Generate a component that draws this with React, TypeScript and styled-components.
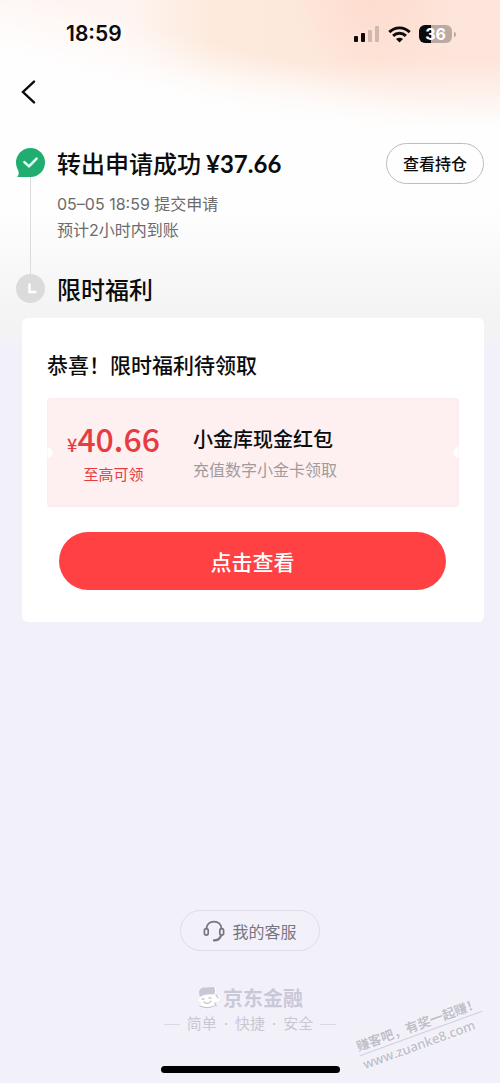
import React from "react";
import styled, { createGlobalStyle } from "styled-components";

const GlobalStyle = createGlobalStyle`
  *, *::before, *::after { box-sizing: border-box; }
  body {
    margin: 0;
    background: #f2f1fa;
    color: #0c0c0c;
    font-family: "Noto Sans CJK SC", sans-serif;
  }
  h1, h2, h3, p { margin: 0; }
  button { font-family: inherit; cursor: pointer; }
`;

const Page = styled.div`
  position: relative;
  display: flex;
  flex-direction: column;
  min-height: 100vh;
  overflow: hidden;
  background:
    radial-gradient(ellipse 80px 80px at 74% 0, rgba(253, 205, 186, 0.35), transparent),
    linear-gradient(to bottom, transparent 0, transparent 60px, #fefefe 128px, transparent 128px),
    linear-gradient(15deg, #fefefe 0, #fefefe 30%, transparent 55%) 0 0 / 100% 128px no-repeat,
    linear-gradient(to right, #fef5f2 0, #fef5f2 25%, #fdeadd 42%, #fde8dc 62%, #fde4d9 80%, #fde5db 100%) 0 0 / 100% 128px no-repeat,
    linear-gradient(to bottom, #fefefe 0, #fefefe 210px, #f4f4f4 310px, #f3f3f4 330px, #f2f1fa 350px);
`;

const StatusBar = styled.div`
  display: flex;
  align-items: center;
  justify-content: space-between;
  height: 68px;
  padding: 0 44px 0 66px;
`;

const Time = styled.time`
  font: 600 21px/24px Inter, sans-serif;
`;

const StatusIcons = styled.div`
  display: flex;
  align-items: center;
  gap: 8px;
  svg { display: block; }
`;

const Battery = styled.div`
  display: flex;
  align-items: center;
  gap: 2px;
  &::after {
    content: "";
    width: 2px;
    height: 5px;
    border-radius: 0 2px 2px 0;
    background: #bcaaa2;
  }
`;

const BatteryLevel = styled.span`
  width: 33px;
  height: 18px;
  border-radius: 6px;
  background: linear-gradient(to right, #0c0a0a 36%, #bcaaa2 36%);
  color: #fff;
  font: 700 16px/18px Inter, sans-serif;
  text-align: center;
`;

const NavBar = styled.nav`
  display: flex;
  align-items: center;
  height: 48px;
  padding: 0 16px;
`;

const BackButton = styled.button`
  display: flex;
  padding: 4px;
  border: 0;
  background: none;
  color: #0c0c0c;
`;

const Timeline = styled.ol`
  display: flex;
  flex-direction: column;
  margin: 0;
  padding: 24px 16px 0;
  list-style: none;
`;

const Step = styled.li`
  display: flex;
  gap: 12px;
`;

const Rail = styled.div<{ $line?: boolean }>`
  display: flex;
  flex-direction: column;
  align-items: center;
  flex: 0 0 29px;
  padding-top: 8px;
  svg { display: block; flex: none; }
  &::after {
    content: "";
    flex: 1;
    width: 1px;
    margin-bottom: -8px;
    background: ${(p) => (p.$line ? "#dcdcdc" : "transparent")};
  }
`;

const StepBody = styled.div`
  flex: 1;
  min-width: 0;
`;

const StepHead = styled.div`
  display: flex;
  align-items: center;
  justify-content: space-between;
  height: 46px;
`;

const StepTitle = styled.h1`
  font-size: 24px;
  font-weight: 500;
  line-height: 32px;
  white-space: nowrap;
`;

const TitleAmount = styled.span`
  margin-left: 5px;
  font-family: Lato, sans-serif;
  font-weight: 700;
`;

const StepNotes = styled.div`
  padding: 5px 0 23px;
  color: #6b6b6b;
  font: 400 16px/26px Inter, "Noto Sans CJK SC", sans-serif;
`;

const OutlineButton = styled.button`
  height: 41px;
  padding: 0 16px;
  border: 1px solid #bdbdbd;
  border-radius: 21px;
  background: #fefefe;
  color: #0c0c0c;
  font-size: 16px;
  font-weight: 500;
  line-height: 24px;
  white-space: nowrap;
`;

const Card = styled.section`
  margin: 6px 16px 0 22px;
  padding: 30px 25px 32px;
  border-radius: 6px;
  background: #fff;
`;

const CardTitle = styled.h2`
  font-size: 21px;
  font-weight: 500;
  line-height: 32px;
`;

const Coupon = styled.div`
  display: flex;
  align-items: center;
  height: 109px;
  margin-top: 18px;
  border-radius: 4px;
  background:
    radial-gradient(circle at 0 50%, #fff 5px, transparent 6px),
    radial-gradient(circle at 100% 50%, #fff 5px, transparent 6px),
    #fef0f0;
  box-shadow: inset 0 0 2px #f3e3e3;
`;

const CouponValue = styled.div`
  display: flex;
  flex-direction: column;
  align-items: center;
  flex: 0 0 133px;
  color: #e63c42;
`;

const Price = styled.div`
  font-size: 32px;
  font-weight: 500;
  line-height: 36px;
`;

const Currency = styled.span`
  font-size: 18px;
`;

const PriceNote = styled.div`
  font-size: 15px;
  line-height: 24px;
`;

const CouponInfo = styled.div`
  margin-left: 13px;
`;

const CouponName = styled.h3`
  font-size: 20px;
  font-weight: 500;
  line-height: 32px;
`;

const CouponHint = styled.p`
  color: #a39a9b;
  font-size: 16px;
  line-height: 28px;
`;

const PrimaryButton = styled.button`
  display: block;
  width: calc(100% - 25px);
  height: 58px;
  margin: 25px 13px 0 12px;
  border: 0;
  border-radius: 29px;
  background: #ff4144;
  color: #fff;
  font-size: 21px;
  font-weight: 500;
`;

const Footer = styled.footer`
  display: flex;
  flex-direction: column;
  align-items: center;
  margin-top: auto;
  padding: 32px 0 10px;
`;

const ServiceButton = styled.button`
  display: flex;
  align-items: center;
  justify-content: center;
  gap: 7px;
  width: 140px;
  height: 41px;
  border: 1px solid #dedde6;
  border-radius: 21px;
  background: transparent;
  color: #77767f;
  font-size: 16px;
`;

const Brand = styled.div`
  display: flex;
  align-items: center;
  gap: 2px;
  margin-top: 34px;
  color: #cac8d8;
  font-size: 20px;
  font-weight: 700;
  line-height: 26px;
`;

const Tagline = styled.p`
  display: flex;
  align-items: center;
  gap: 7px;
  margin-top: 1px;
  color: #c9c8d2;
  font: 400 15px/24px Inter, "Noto Sans CJK SC", sans-serif;
  &::before, &::after {
    content: "";
    width: 16px;
    height: 1px;
    background: #dad9e3;
  }
`;

const HomeIndicator = styled.div`
  width: 179px;
  height: 7px;
  margin-top: 30px;
  border-radius: 4px;
  background: #000;
`;

const Watermark = styled.div`
  position: absolute;
  right: 14px;
  bottom: 31px;
  transform: rotate(-20deg);
  color: #c0bfca;
  font-weight: 700;
  line-height: 18px;
  white-space: nowrap;
  text-shadow: 0 0 2px #fff;
`;

const WatermarkName = styled.div`
  border-bottom: 1px solid #d0cfda;
  font-size: 13px;
`;

const WatermarkSite = styled.div`
  font-family: "Open Sans", sans-serif;
  font-size: 13px;
  font-weight: 600;
`;

const SignalIcon = () => (
  <svg width="26" height="16" viewBox="0 0 26 16" aria-hidden="true">
    <rect x="0" y="10" width="4" height="6" rx="1" fill="#0c0a0a" />
    <rect x="7" y="7" width="4" height="9" rx="1" fill="#0c0a0a" />
    <rect x="14" y="4" width="4" height="12" rx="1" fill="#cfb9ae" />
    <rect x="21" y="0" width="4" height="16" rx="1" fill="#cfb9ae" />
  </svg>
);

const WifiIcon = () => (
  <svg width="23" height="17" viewBox="0 0 23 17" fill="none" stroke="#0c0a0a" strokeWidth="2.9" aria-hidden="true">
    <path d="M1.3 6.1C7 .4 16 .4 21.7 6.1" />
    <path d="M5.1 9.9c3.6-3.5 9.2-3.5 12.8 0" />
    <path d="M11.5 16.6 8 13.1c2-1.8 5-1.8 7 0z" fill="#0c0a0a" stroke="none" />
  </svg>
);

const BackIcon = () => (
  <svg width="18" height="24" viewBox="0 0 18 24" fill="none" stroke="currentColor" strokeWidth="2.4" strokeLinecap="round" aria-hidden="true">
    <path d="M14 1.6 3 12l11 10.4" />
  </svg>
);

const DoneIcon = () => (
  <svg width="29" height="29" viewBox="0 0 29 29" aria-hidden="true">
    <circle cx="14.5" cy="14.5" r="14.5" fill="#1fae70" />
    <path d="M1.6 21c1.8 3.200 1.400 5.800-.3 8h13.200V20z" fill="#1fae70" />
    <path d="m8.400 14.200 4.600 4.200 7.600-7.800" fill="none" stroke="#e9fff5" strokeWidth="2.500" strokeLinecap="round" strokeLinejoin="round" />
  </svg>
);

const PendingIcon = () => (
  <svg width="29" height="29" viewBox="0 0 29 29" aria-hidden="true">
    <circle cx="14.5" cy="14.5" r="14.5" fill="#dbdbdb" />
    <path d="M13.500 9.500v8.500h7" fill="none" stroke="#fff" strokeWidth="2.500" />
  </svg>
);

const HeadsetIcon = () => (
  <svg width="22" height="22" viewBox="0 0 22 22" fill="none" stroke="currentColor" strokeWidth="1.7" strokeLinecap="round" aria-hidden="true">
    <path d="M3.400 8.600C4 4.300 7 1.700 11 1.700s7 2.600 7.600 6.900" />
    <rect x="1.400" y="8.600" width="3.800" height="6.600" rx="1.900" />
    <rect x="16.800" y="8.600" width="3.800" height="6.600" rx="1.900" />
    <path d="M18 15.600c-1 3-3.400 4.800-7 4.800" strokeWidth="2.200" />
  </svg>
);

const MascotIcon = () => (
  <svg width="24" height="24" viewBox="0 0 24 24" aria-hidden="true">
    <path d="M3 7c0-4 3-5.500 7-5l7-.8c2 0 3 2 2 3.600l-1 3.400 2 2.800 3-1-1 5-3 1-1 5c-3 2-12 2-15 0l1-4-3-3 2-2z" fill="#fff" />
    <path d="M2 7c0-4 3-6 7-5.500l8-.5c1.500 2.600 1.500 6.600-.5 7.600C12 8 7 8.500 3 11z" fill="#c9c7d5" />
    <path d="M5 13h2m5-1h2m-7 4c2 2 5 2 7-1M19 9l2 3m-3 5 1 3M3 20c4 2 10 2 14 0" fill="none" stroke="#c5c3d0" strokeWidth="1.300" strokeLinecap="round" />
  </svg>
);

export default function App() {
  return (
    <>
      <GlobalStyle />
      <Page>
        <StatusBar>
          <Time>18:59</Time>
          <StatusIcons>
            <SignalIcon />
            <WifiIcon />
            <Battery>
              <BatteryLevel>36</BatteryLevel>
            </Battery>
          </StatusIcons>
        </StatusBar>
        <NavBar>
          <BackButton type="button" aria-label="返回">
            <BackIcon />
          </BackButton>
        </NavBar>
        <main>
          <Timeline>
            <Step>
              <Rail $line>
                <DoneIcon />
              </Rail>
              <StepBody>
                <StepHead>
                  <StepTitle>
                    转出申请成功<TitleAmount>¥37.66</TitleAmount>
                  </StepTitle>
                  <OutlineButton type="button">查看持仓</OutlineButton>
                </StepHead>
                <StepNotes>
                  <p>05–05 18:59 提交申请</p>
                  <p>预计2小时内到账</p>
                </StepNotes>
              </StepBody>
            </Step>
            <Step>
              <Rail>
                <PendingIcon />
              </Rail>
              <StepBody>
                <StepHead>
                  <StepTitle as="h2">限时福利</StepTitle>
                </StepHead>
              </StepBody>
            </Step>
          </Timeline>
          <Card>
            <CardTitle>恭喜！限时福利待领取</CardTitle>
            <Coupon>
              <CouponValue>
                <Price>
                  <Currency>¥</Currency>40.66
                </Price>
                <PriceNote>至高可领</PriceNote>
              </CouponValue>
              <CouponInfo>
                <CouponName>小金库现金红包</CouponName>
                <CouponHint>充值数字小金卡领取</CouponHint>
              </CouponInfo>
            </Coupon>
            <PrimaryButton type="button">点击查看</PrimaryButton>
          </Card>
        </main>
        <Footer>
          <ServiceButton type="button">
            <HeadsetIcon />
            我的客服
          </ServiceButton>
          <Brand>
            <MascotIcon />
            京东金融
          </Brand>
          <Tagline>
            <span>简单</span>
            <span>·</span>
            <span>快捷</span>
            <span>·</span>
            <span>安全</span>
          </Tagline>
          <HomeIndicator />
        </Footer>
        <Watermark>
          <WatermarkName>赚客吧，有奖一起赚！</WatermarkName>
          <WatermarkSite>www.zuanke8.com</WatermarkSite>
        </Watermark>
      </Page>
    </>
  );
}
